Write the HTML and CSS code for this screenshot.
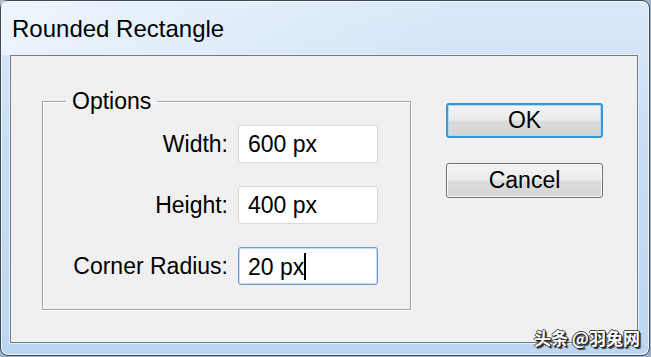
FILE: index.html
```html
<!DOCTYPE html>
<html lang="en">
<head>
  <meta charset="UTF-8" />
  <title>Rounded Rectangle</title>
  <link rel="stylesheet" href="styles.css">
</head>
<body>
  <div class="window">
    <div class="titlebar">Rounded Rectangle</div>
    <div class="panel">
      <fieldset class="options">
        <legend>Options</legend>
        <div class="row">
          <label for="w">Width:</label>
          <div class="field" id="w">600 px</div>
        </div>
        <div class="row">
          <label for="h">Height:</label>
          <div class="field" id="h">400 px</div>
        </div>
        <div class="row">
          <label for="r">Corner Radius:</label>
          <div class="field focus" id="r">20 px<span class="caret"></span></div>
        </div>
      </fieldset>
      <div class="buttons">
        <button class="btn default">OK</button>
        <button class="btn">Cancel</button>
      </div>
    </div>
    <div class="watermark">头条 @羽兔网</div>
  </div>
</body>
</html>
```

FILE: styles.css
```css
html, body {
  margin: 0;
  padding: 0;
  background: #9fb4c8;
}
body {
  font-family: "Liberation Sans", Arial, sans-serif;
  color: #000;
  width: 651px;
  height: 357px;
  overflow: hidden;
}
.window {
  position: relative;
  box-sizing: border-box;
  width: 650px;
  height: 356px;
  border: 1px solid #3d4a57;
  border-radius: 8px;
  background: linear-gradient(to bottom, #d9e9f8 0%, #c9def4 40%, #bcd6f1 100%);
  box-shadow: inset 0 0 0 1px #eef5fc;
}
.titlebar {
  height: 54px;
  box-sizing: border-box;
  padding: 14px 0 0 11px;
  font-size: 24px;
  background: linear-gradient(to right, rgba(255,255,255,0.55), rgba(255,255,255,0) 70%);
}
.panel {
  display: flex;
  box-sizing: border-box;
  margin-left: 9px;
  width: 628px;
  height: 288px;
  background: #f0f0f0;
  border: 1px solid #6f7c89;
  box-shadow: 0 0 0 1px #e6eef8;
}
.options {
  box-sizing: border-box;
  margin: 32px 0 0 31px;
  width: 369px;
  height: 222px;
  padding: 10px 0 0 0;
  border: 1px solid #a3a3a3;
  box-shadow: 1px 1px 0 #fff inset, 1px 1px 0 #fff;
}
.options legend {
  margin-left: 23px;
  padding: 0 6px;
  font-size: 23px;
}
.row {
  display: flex;
  align-items: center;
  height: 38px;
  margin-bottom: 23px;
}
.row label {
  width: 185px;
  text-align: right;
  font-size: 23px;
  padding-right: 10px;
}
.field {
  box-sizing: border-box;
  width: 140px;
  height: 38px;
  padding: 5px 0 0 9px;
  background: #fff;
  border: 1px solid #d9d9d9;
  border-radius: 3px;
  font-size: 23px;
}
.field.focus {
  border-color: #6d9ccc;
  box-shadow: inset 0 0 0 1px #c8dcf0;
}
.caret {
  display: inline-block;
  width: 2px;
  height: 27px;
  background: #000;
  vertical-align: -5px;
}
.buttons {
  display: flex;
  flex-direction: column;
  gap: 25px;
  margin: 47px 0 0 35px;
}
.btn {
  box-sizing: border-box;
  width: 157px;
  height: 35px;
  font-family: "Liberation Sans", Arial, sans-serif;
  font-size: 23px;
  color: #000;
  border: 1px solid #707070;
  border-radius: 3px;
  background: linear-gradient(to bottom, #f4f4f4 0%, #ebebeb 48%, #dcdcdc 52%, #d4d4d4 100%);
  box-shadow: inset 0 0 0 1px #fbfbfb;
  padding: 0;
}
.btn.default {
  border: 2px solid #3d94d6;
  box-shadow: inset 0 0 0 1px #a9dcf6;
}
.watermark {
  position: absolute;
  right: 9px;
  bottom: 5px;
  font-family: "Noto Sans CJK SC", sans-serif;
  font-size: 17px;
  font-weight: bold;
  color: #fff;
  text-shadow: 1px 1px 0 #222, -1px 0 0 #444, 0 -1px 0 #444, 1px 0 0 #222, 2px 2px 1px #333;
}
```
